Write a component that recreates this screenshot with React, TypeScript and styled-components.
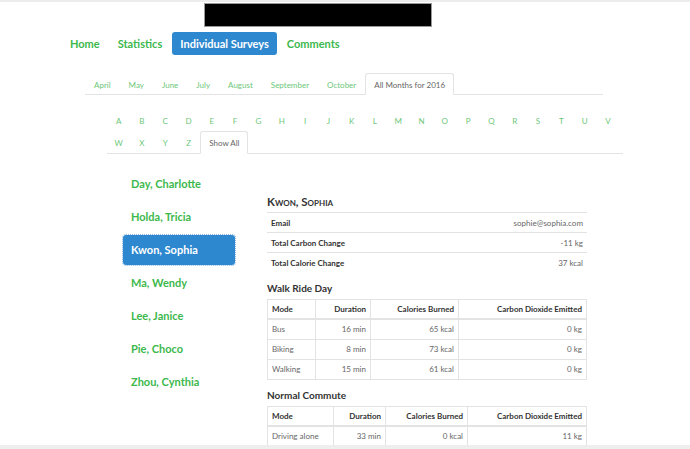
import React from "react";
import styled, { createGlobalStyle, css } from "styled-components";

const Global = createGlobalStyle`
  html, body { margin: 0; padding: 0; background: #fff; }
  body { font-family: Lato, "Liberation Sans", sans-serif; color: #333; overflow: hidden; }
  * { box-sizing: border-box; }
`;

const GREEN = "#3db84d";
const BLUE = "#2d88cf";

const Page = styled.div`
  border-top: 2px solid #ececec;
  width: 690px;
  height: 449px;
  position: relative;
`;

const Banner = styled.div`
  margin: 1px 0 0 204px;
  width: 228px;
  height: 24px;
  background: #000;
  border: 1px solid #999;
`;

const NavList = styled.ul`
  list-style: none;
  margin: 5px 0 0 62px;
  padding: 0;
  display: flex;
  gap: 2px;
`;

const Pill = styled.li<{ $active?: boolean }>`
  font-size: 11px;
  font-weight: 700;
  padding: 0 8px;
  height: 23px;
  line-height: 23px;
  border-radius: 3px;
  color: ${GREEN};
  ${(p) =>
    p.$active &&
    css`
      background: ${BLUE};
      color: #fff;
    `}
`;

const Tabs = styled.ul<{ $left: number; $width: number; $top: number }>`
  list-style: none;
  margin: ${(p) => p.$top}px 0 0 ${(p) => p.$left}px;
  width: ${(p) => p.$width}px;
  padding: 0;
  display: flex;
  flex-wrap: wrap;
  border-bottom: 1px solid #e3e3e3;
`;

const Tab = styled.li<{ $active?: boolean; $w?: number; $h?: number }>`
  font-size: 8px;
  height: ${(p) => p.$h ?? 22}px;
  line-height: 22px;
  padding: 0 8px;
  margin-bottom: -1px;
  color: #6cc778;
  border: 1px solid transparent;
  border-radius: 3px 3px 0 0;
  ${(p) => p.$w && css`width: ${p.$w}px; padding: 0; text-align: center;`}
  ${(p) =>
    p.$active &&
    css`
      color: #666;
      border-color: #e3e3e3;
      border-bottom-color: #fff;
      background: #fff;
    `}
`;

const Body = styled.div`
  display: flex;
  margin-top: 15px;
`;

const Side = styled.ul`
  list-style: none;
  margin: 0 0 0 123px;
  padding: 0;
  width: 112px;
  display: flex;
  flex-direction: column;
  gap: 3px;
`;

const NameItem = styled.li<{ $active?: boolean }>`
  height: 30px;
  line-height: 30px;
  padding: 0 8px;
  font-size: 11px;
  font-weight: 700;
  color: ${GREEN};
  border-radius: 3px;
  ${(p) =>
    p.$active &&
    css`
      background: ${BLUE};
      color: #fff;
      outline: 1px dotted #8fb8e0;
    `}
`;

const Main = styled.div`
  margin-left: 32px;
  width: 320px;
  padding-top: 26px;
`;

const Heading = styled.h3`
  margin: 0 0 3px 0;
  font-size: 11.5px;
  font-weight: 700;
  font-variant: small-caps;
  color: #333;
  line-height: 14px;
`;

const SubHeading = styled.h4`
  margin: 9px 0 4px 0;
  font-size: 10px;
  font-weight: 700;
  color: #333;
  line-height: 13px;
`;

const Table = styled.table<{ $bordered?: boolean }>`
  width: 100%;
  border-collapse: collapse;
  font-size: 8px;
  ${(p) => p.$bordered && css`border: 1px solid #e3e3e3;`}
`;

const Th = styled.th<{ $left?: boolean; $bordered?: boolean; $w?: number }>`
  font-weight: 700;
  color: #333;
  text-align: ${(p) => (p.$left ? "left" : "right")};
  height: 20px;
  padding: 0 4px;
  border-top: 1px solid #e3e3e3;
  ${(p) => p.$w && css`width: ${p.$w}px;`}
  ${(p) => p.$bordered && css`border: 1px solid #e3e3e3; border-bottom-width: 2px;`}
`;

const Td = styled.td<{ $left?: boolean; $bordered?: boolean }>`
  color: #666;
  text-align: ${(p) => (p.$left ? "left" : "right")};
  height: 20px;
  padding: 0 4px;
  border-top: 1px solid #e3e3e3;
  ${(p) => p.$bordered && css`border: 1px solid #e3e3e3;`}
`;

const ScrollBar = styled.div`
  position: absolute;
  left: 0;
  right: 0;
  bottom: 0;
  height: 4px;
  background: #eeeeee;
`;

const months = ["April", "May", "June", "July", "August", "September", "October"];
const letters = "ABCDEFGHIJKLMNOPQRSTUVWXYZ".split("");
const names = ["Day, Charlotte", "Holda, Tricia", "Kwon, Sophia", "Ma, Wendy", "Lee, Janice", "Pie, Choco", "Zhou, Cynthia"];

type Row = [string, string, string, string];
const walk: Row[] = [
  ["Bus", "16 min", "65 kcal", "0 kg"],
  ["Biking", "8 min", "73 kcal", "0 kg"],
  ["Walking", "15 min", "61 kcal", "0 kg"],
];
const commute: Row[] = [["Driving alone", "33 min", "0 kcal", "11 kg"]];

function TripTable({ rows, widths }: { rows: Row[]; widths: number[] }) {
  return (
    <Table $bordered>
      <thead>
        <tr>
          <Th $left $bordered $w={widths[0]}>Mode</Th>
          <Th $bordered $w={widths[1]}>Duration</Th>
          <Th $bordered $w={widths[2]}>Calories Burned</Th>
          <Th $bordered>Carbon Dioxide Emitted</Th>
        </tr>
      </thead>
      <tbody>
        {rows.map((r) => (
          <tr key={r[0]}>
            <Td $left $bordered>{r[0]}</Td>
            <Td $bordered>{r[1]}</Td>
            <Td $bordered>{r[2]}</Td>
            <Td $bordered>{r[3]}</Td>
          </tr>
        ))}
      </tbody>
    </Table>
  );
}

export default function App() {
  return (
    <Page>
      <Global />
      <Banner />
      <NavList>
        <Pill>Home</Pill>
        <Pill>Statistics</Pill>
        <Pill $active>Individual Surveys</Pill>
        <Pill>Comments</Pill>
      </NavList>
      <Tabs $left={85} $width={518} $top={18}>
        {months.map((m) => (
          <Tab key={m}>{m}</Tab>
        ))}
        <Tab $active>All Months for 2016</Tab>
      </Tabs>
      <Tabs $left={107} $width={516} $top={14}>
        {letters.map((l) => (
          <Tab key={l} $w={23.3} $h={23}>{l}</Tab>
        ))}
        <Tab $active $h={23}>Show All</Tab>
      </Tabs>
      <Body>
        <Side>
          {names.map((n) => (
            <NameItem key={n} $active={n === "Kwon, Sophia"}>{n}</NameItem>
          ))}
        </Side>
        <Main>
          <Heading>Kwon, Sophia</Heading>
          <Table>
            <tbody>
              <tr>
                <Th $left>Email</Th>
                <Td>sophie@sophia.com</Td>
              </tr>
              <tr>
                <Th $left>Total Carbon Change</Th>
                <Td>-11 kg</Td>
              </tr>
              <tr>
                <Th $left>Total Calorie Change</Th>
                <Td>37 kcal</Td>
              </tr>
            </tbody>
          </Table>
          <SubHeading>Walk Ride Day</SubHeading>
          <TripTable rows={walk} widths={[48, 55, 88]} />
          <SubHeading>Normal Commute</SubHeading>
          <TripTable rows={commute} widths={[66, 52, 82]} />
        </Main>
      </Body>
      <ScrollBar />
    </Page>
  );
}
